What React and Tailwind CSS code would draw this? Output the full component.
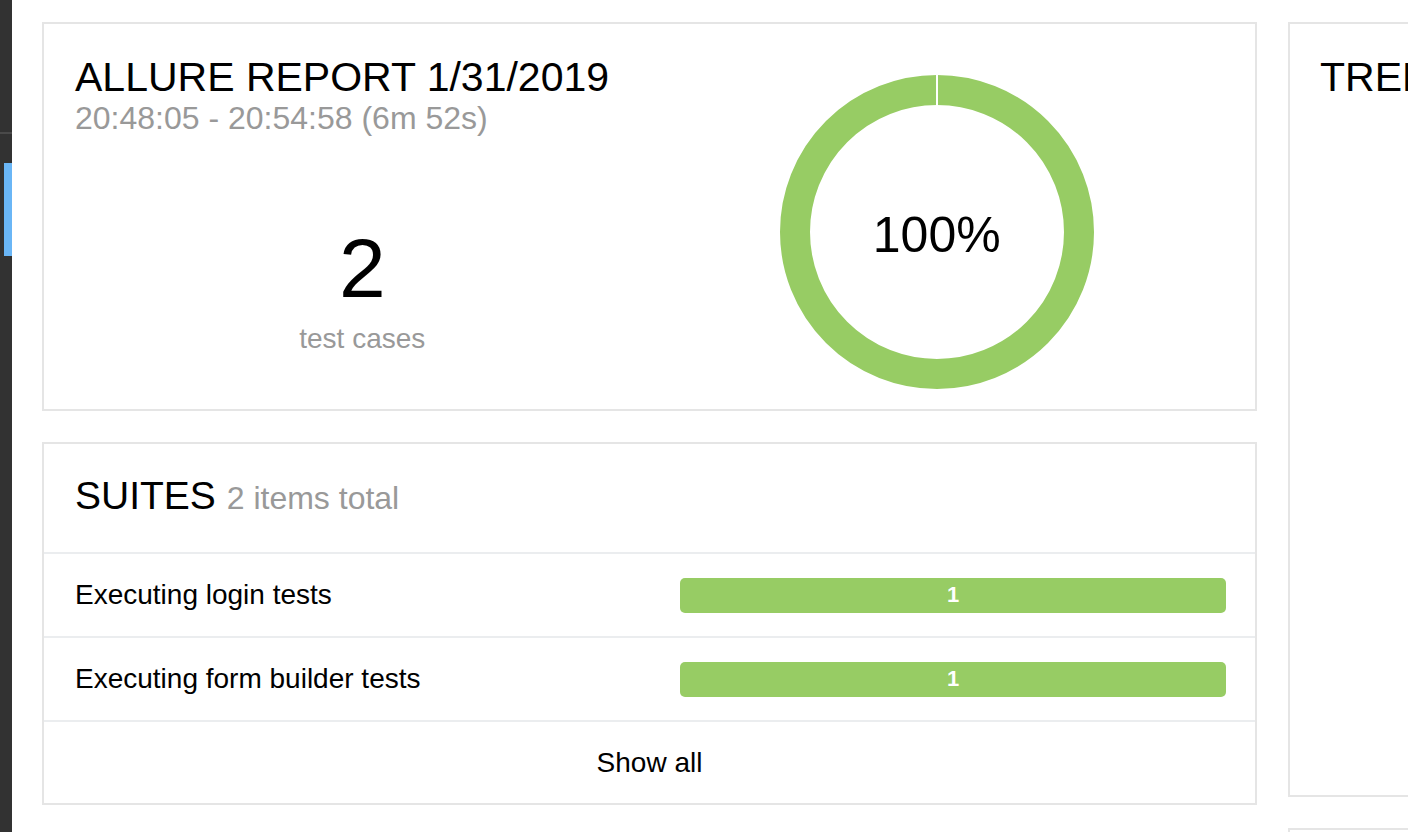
import React from "react";

const suites = [
  { name: "Executing login tests", passed: 1 },
  { name: "Executing form builder tests", passed: 1 },
];

function Donut() {
  return (
    <div className="relative h-[314px] w-[314px]">
      <svg width="314" height="314" viewBox="0 0 314 314">
        <circle cx="157" cy="157" r="142" fill="none" stroke="#97cc64" strokeWidth="30" />
        <rect x="156" y="0" width="2" height="32" fill="#ffffff" />
      </svg>
      <div className="absolute inset-0 flex items-center justify-center">
        <span className="mt-[5px] text-[50px] leading-none text-black">100%</span>
      </div>
    </div>
  );
}

function SummaryCard() {
  return (
    <div className="grid h-[389px] shrink-0 grid-cols-2 border-2 border-[#e5e5e5] px-[31px]">
      <div className="flex flex-col pt-[33px]">
        <h2 className="text-[41px] leading-none text-black">ALLURE REPORT 1/31/2019</h2>
        <div className="mt-[4px] text-[32px] leading-none text-[#999]">
          20:48:05 - 20:54:58 (6m 52s)
        </div>
        <div className="mt-[92px] flex flex-col items-center">
          <div className="text-[84px] leading-none text-black">2</div>
          <div className="mt-[15px] text-[28px] leading-none text-[#999]">test cases</div>
        </div>
      </div>
      <div className="flex justify-center pt-[51px]">
        <Donut />
      </div>
    </div>
  );
}

function SuitesCard() {
  return (
    <div className="flex h-[363px] shrink-0 flex-col border-2 border-[#e5e5e5]">
      <div className="h-[108px] px-[31px] pt-[32px]">
        <h2 className="text-[39px] leading-none text-black">
          SUITES <span className="text-[32px] text-[#999]">2 items total</span>
        </h2>
      </div>
      {suites.map((s) => (
        <div
          key={s.name}
          className="flex h-[84px] items-center justify-between border-t-2 border-[#ebedef] pl-[31px] pr-[29px]"
        >
          <span className="text-[28px] leading-none text-black">{s.name}</span>
          <div className="flex h-[35px] w-[546px] items-center justify-center rounded-[5px] bg-[#97cc64] text-[22px] font-bold leading-none text-white">
            {s.passed}
          </div>
        </div>
      ))}
      <div className="flex flex-1 items-center justify-center border-t-2 border-[#ebedef]">
        <span className="text-[28px] leading-none text-black">Show all</span>
      </div>
    </div>
  );
}

export default function App() {
  return (
    <div className="flex h-[832px] w-[1408px] overflow-hidden bg-white font-['Liberation_Sans',Arial,sans-serif]">
      {/* Side nav strip */}
      <aside className="w-[12px] shrink-0 bg-[#323232]">
        <div className="h-[132px]" />
        <div className="h-[2px] bg-[#4a4a4a]" />
        <div className="ml-[4px] mt-[29px] h-[93px] bg-[#6ab6f6]" />
      </aside>

      {/* Widgets */}
      <main className="flex items-start gap-[31px] pl-[30px] pt-[22px]">
        <div className="flex w-[1215px] shrink-0 flex-col gap-[31px]">
          <SummaryCard />
          <SuitesCard />
        </div>
        <div className="flex w-[1215px] shrink-0 flex-col gap-[31px]">
          <div className="h-[775px] shrink-0 border-2 border-[#e5e5e5] pl-[30px] pt-[33px]">
            <h2 className="text-[41px] leading-none text-black">TRENDS</h2>
          </div>
          <div className="h-[300px] shrink-0 border-2 border-[#e5e5e5]" />
        </div>
      </main>
    </div>
  );
}
